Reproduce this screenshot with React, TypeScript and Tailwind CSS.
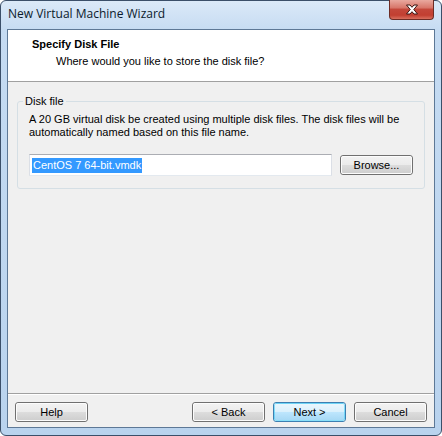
import React from 'react';

const titleFont = { fontFamily: '"Open Sans", "Noto Sans", sans-serif' };
const dlgFont = { fontFamily: '"Liberation Sans", Arial, sans-serif' };

function WinButton({ label, primary = false }: { label: string; primary?: boolean }) {
  return (
    <button
      className={`relative w-[73px] h-[20px] rounded-[3px] border text-[11px] leading-[14px] text-black overflow-hidden ${
        primary ? 'border-[#3c7fb1]' : 'border-[#707070]'
      }`}
    >
      <span
        className={`absolute inset-0 rounded-[2px] border ${
          primary
            ? 'border-[#48d1f6]/60 bg-[linear-gradient(#eaf6fd_0%,#d9f0fc_50%,#bee6fd_50%,#a7d9f5_100%)]'
            : 'border-[#fcfcfc] bg-[linear-gradient(#f2f2f2_0%,#ebebeb_50%,#dddddd_50%,#cfcfcf_100%)]'
        }`}
      />
      <span className="relative">{label}</span>
    </button>
  );
}

export default function App() {
  return (
    <div className="w-[442px] h-[436px] text-black" style={dlgFont}>
      <div className="w-full h-full flex flex-col border border-[#3b4f69] rounded-[6px] px-[6px] pb-[7px] bg-[linear-gradient(180deg,#dbe9f8_0%,#c5dbf2_30px,#b9d3ee_100%)]">
        {/* title bar */}
        <div className="h-[28px] flex items-start shrink-0">
          <div className="pl-[1px] pt-[5px] text-[12px] leading-[16px] text-[#0b1a2c]" style={titleFont}>
            New Virtual Machine Wizard
          </div>
          <button className="ml-auto -mt-px mr-px w-[45px] h-[20px] rounded-b-[4px] border border-t-0 border-[#6d2c25] bg-[linear-gradient(#e9a99f_0%,#d8776b_40%,#c4473a_50%,#c23f31_80%,#d96f5e_100%)] flex items-center justify-center">
            <svg width="14" height="11" viewBox="0 0 14 11">
              <path
                d="M1.5 1 H5 L7 3.3 L9 1 H12.5 L8.8 5.5 L12.5 10 H9 L7 7.7 L5 10 H1.5 L5.2 5.5 Z"
                fill="#ffffff"
                stroke="#3a1410"
                strokeWidth="1"
                strokeLinejoin="round"
              />
            </svg>
          </button>
        </div>

        {/* client area */}
        <div className="flex-1 flex flex-col border border-[#5d7896] bg-[#f0f0f0]">
          <div className="h-[52px] shrink-0 bg-white border-b border-[#a0a0a0] pt-[7px]">
            <div className="pl-[24px] text-[11px] leading-[15px] font-bold">Specify Disk File</div>
            <div className="pl-[48px] text-[11px] leading-[15px] mt-[2px]">Where would you like to store the disk file?</div>
          </div>

          <div className="flex-1 px-[9px] pt-[19px]">
            <div className="relative h-[88px] border border-[#d5dfe5] rounded-[3px] px-[11px] pt-[11px]">
              <span className="absolute -top-[8px] left-[5px] px-[2px] bg-[#f0f0f0] text-[11px] leading-[14px]">Disk file</span>
              <p className="text-[11px] leading-[13px]">
                A 20 GB virtual disk be created using multiple disk files. The disk files will be automatically named based on this file name.
              </p>
              <div className="flex items-center gap-[8px] mt-[15px]">
                <div className="w-[303px] h-[22px] border border-[#abadb3] border-b-[#e3e9ef] border-x-[#dbdfe6] bg-white flex items-center px-[2px]">
                  <span className="bg-[#3399ff] text-white text-[11px] leading-[15px] px-px">CentOS 7 64-bit.vmdk</span>
                </div>
                <WinButton label="Browse..." />
              </div>
            </div>
          </div>

          <div className="h-px bg-[#a0a0a0] shrink-0" />
          <div className="h-[33px] shrink-0 flex items-start pt-[7px] px-[7px] border-t border-white">
            <WinButton label="Help" />
            <div className="ml-auto flex gap-[8px]">
              <WinButton label="< Back" />
              <WinButton label="Next >" primary />
              <WinButton label="Cancel" />
            </div>
          </div>
        </div>
      </div>
    </div>
  );
}
